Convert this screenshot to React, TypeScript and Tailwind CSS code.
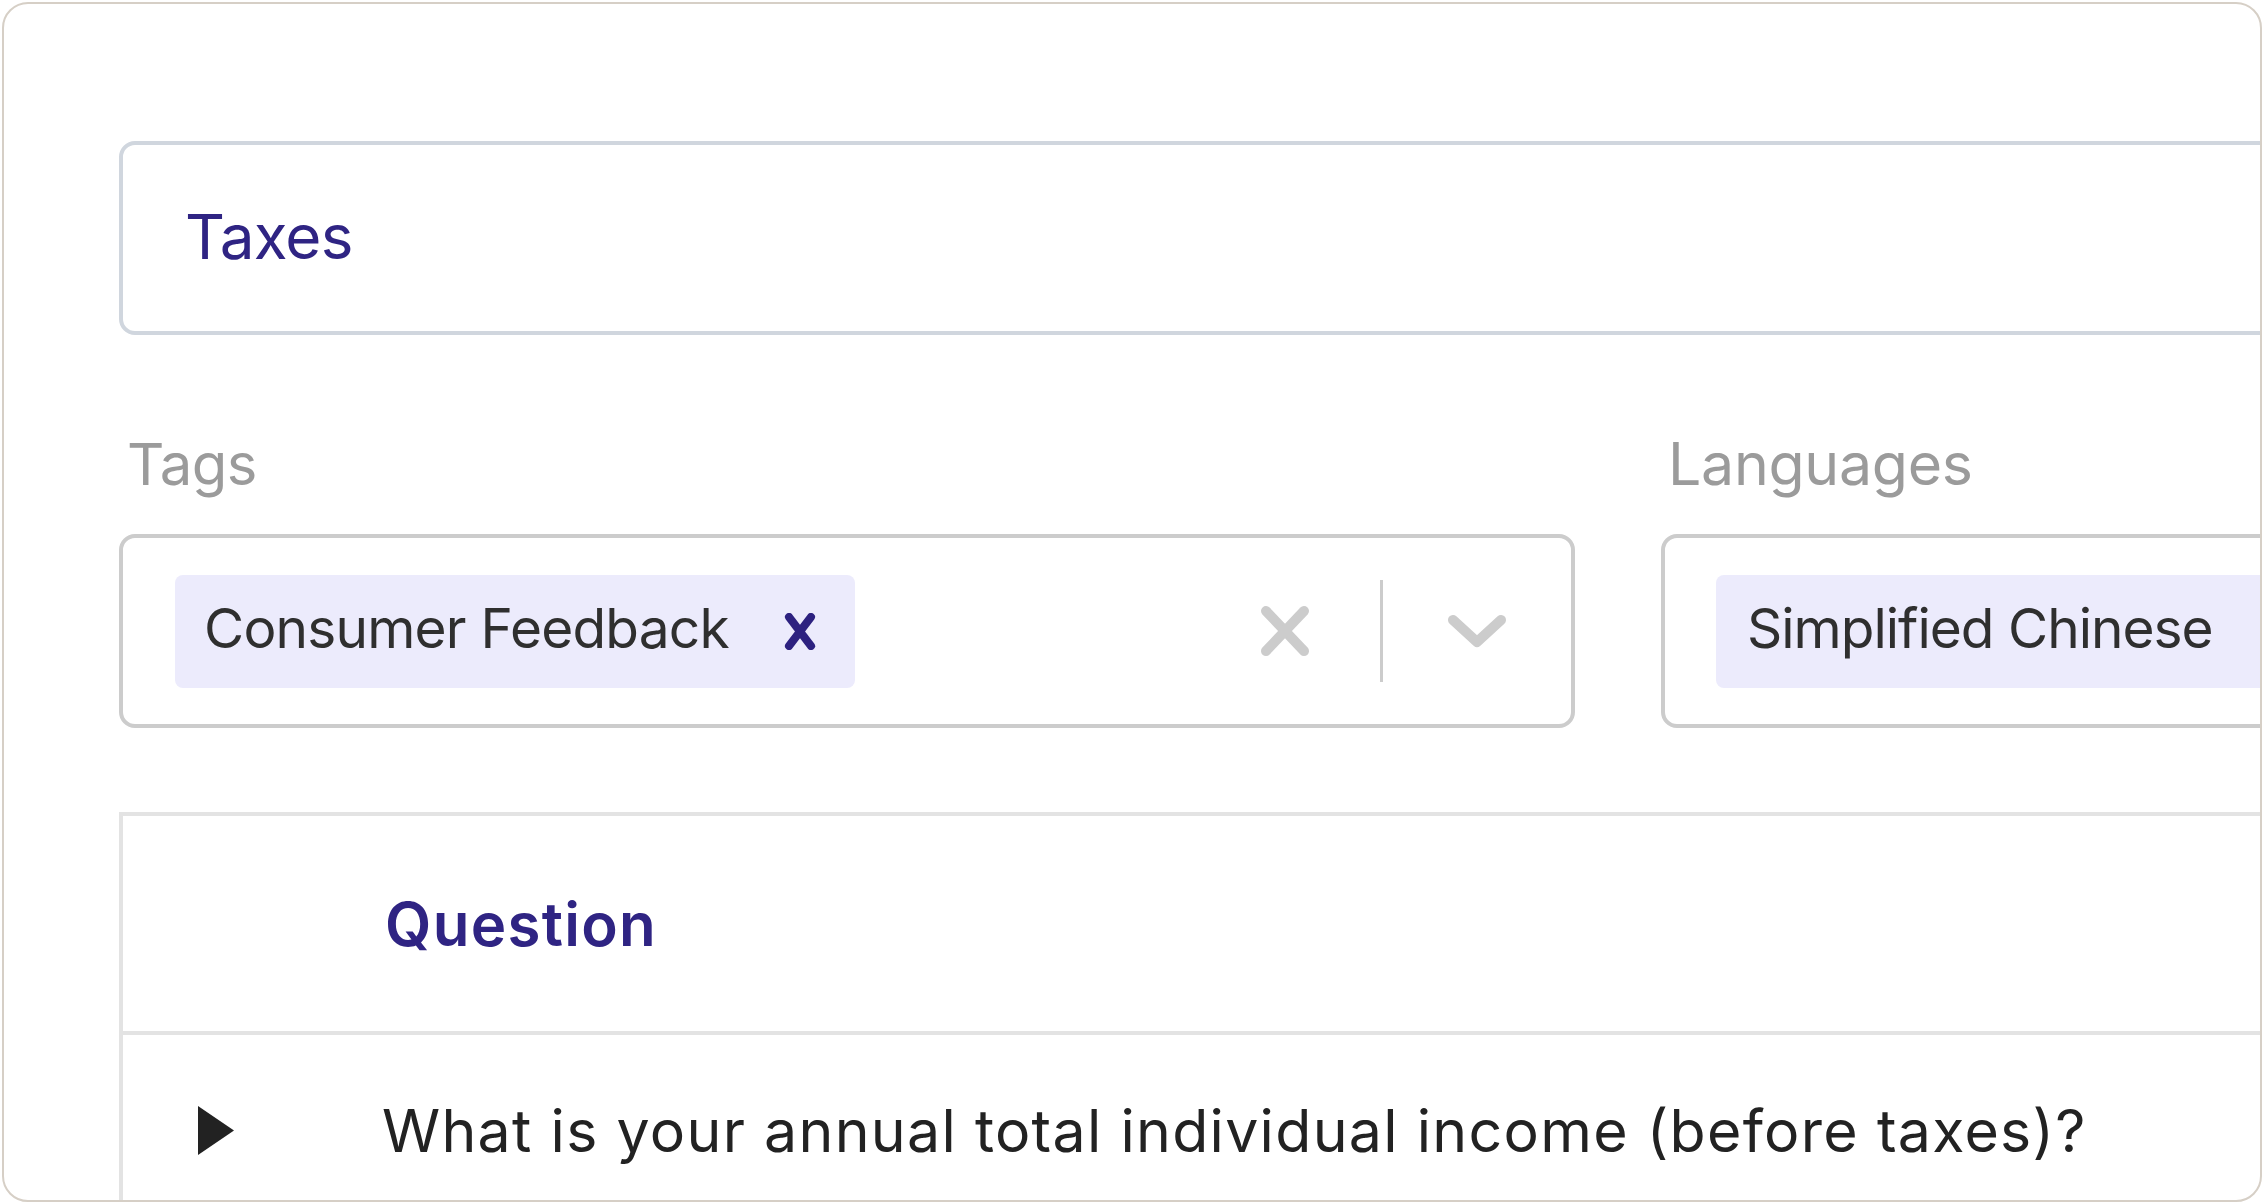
import React from "react";

const font = { fontFamily: "Inter, 'Liberation Sans', sans-serif" };

function ClearIcon() {
  return (
    <svg width="50" height="52" viewBox="0 0 50 52">
      <line x1="6" y1="6" x2="44" y2="46" stroke="#cccccc" strokeWidth="10" strokeLinecap="round" />
      <line x1="44" y1="6" x2="6" y2="46" stroke="#cccccc" strokeWidth="10" strokeLinecap="round" />
    </svg>
  );
}

function Chevron() {
  return (
    <svg width="60" height="34" viewBox="0 0 60 34">
      <polyline points="6,6 30,28 54,6" fill="none" stroke="#cccccc" strokeWidth="10" strokeLinecap="round" strokeLinejoin="round" />
    </svg>
  );
}

function ChipX() {
  return (
    <svg width="34" height="37" viewBox="0 0 34 37">
      <line x1="6" y1="4" x2="28" y2="33" stroke="#2d2180" strokeWidth="8" strokeLinecap="round" />
      <line x1="28" y1="4" x2="6" y2="33" stroke="#2d2180" strokeWidth="8" strokeLinecap="round" />
    </svg>
  );
}

function Triangle() {
  return (
    <svg width="36" height="49" viewBox="0 0 36 49">
      <polygon points="0,0 36,24.5 0,49" fill="#222222" />
    </svg>
  );
}

export default function App() {
  return (
    <div className="w-[2264px] h-[1204px] bg-white p-[2px]" style={font}>
      <div className="h-full w-full rounded-[26px] border-2 border-[#d6cfc6] overflow-hidden pl-[115px] pt-[137px] bg-white">
        {/* Title input */}
        <div className="w-[2200px] h-[194px] border-4 border-[#d0d6de] rounded-[16px] flex items-center pl-[62px] pb-[2px]">
          <span className="text-[62px] tracking-[-0.8px] text-[#2f2483] leading-none">Taxes</span>
        </div>

        {/* Tags / Languages */}
        <div className="flex gap-[86px] mt-[93px]">
          <div className="w-[1456px] shrink-0 flex flex-col">
            <div className="text-[58px] tracking-[-0.5px] leading-[72px] text-[#9b9b9b] pl-[8px]">Tags</div>
            <div className="mt-[34px] h-[194px] border-4 border-[#cccccc] rounded-[16px] flex items-center pl-[52px] pr-[64px]">
              <div className="h-[113px] bg-[#ecebfc] rounded-[8px] flex items-center pl-[29px] pr-[38px] pb-[5px]">
                <span className="text-[55px] tracking-[-0.8px] text-[#2f2f2f] leading-none">Consumer Feedback</span>
                <span className="ml-[54px] flex items-center pt-[5px]">
                  <ChipX />
                </span>
              </div>
              <div className="flex-1" />
              <ClearIcon />
              <div className="w-[3px] h-[102px] bg-[#cccccc] ml-[70px] mr-[64px]" />
              <Chevron />
            </div>
          </div>
          <div className="w-[1456px] shrink-0 flex flex-col">
            <div className="text-[59px] tracking-[-0.3px] leading-[72px] text-[#9b9b9b] pl-[7px]">Languages</div>
            <div className="mt-[34px] h-[194px] border-4 border-[#cccccc] rounded-[16px] flex items-center pl-[51px]">
              <div className="h-[113px] bg-[#ecebfc] rounded-[8px] flex items-center pl-[31px] pr-[120px] pb-[5px]">
                <span className="text-[55px] tracking-[-1px] text-[#2f2f2f] leading-none">Simplified Chinese</span>
              </div>
            </div>
          </div>
        </div>

        {/* Table */}
        <div className="mt-[84px] w-[2200px] border-l-4 border-t-4 border-[#e3e3e3]">
          <div className="h-[219px] flex items-center pl-[262px] border-b-4 border-[#e3e3e3]">
            <span className="text-[60px] font-semibold tracking-[1.3px] text-[#2f2483] leading-none">Question</span>
          </div>
          <div className="h-[190px] flex items-center">
            <div className="w-[259px] shrink-0 pl-[75px] flex items-center">
              <Triangle />
            </div>
            <span className="text-[59px] tracking-[1.3px] text-[#222222] leading-none whitespace-nowrap">
              What is your annual total individual income (before taxes)?
            </span>
          </div>
        </div>
      </div>
    </div>
  );
}
